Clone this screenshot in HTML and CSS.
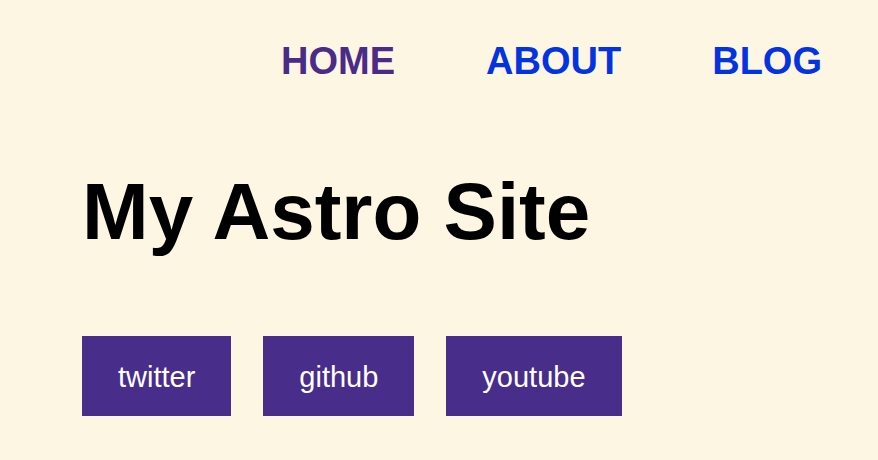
FILE: index.html
```html
<!DOCTYPE html>
<html lang="en">
<head>
<meta charset="utf-8">
<title>My Astro Site</title>
<link rel="stylesheet" href="styles.css">
</head>
<body>
<nav class="nav">
  <a class="nav-link visited" href="#">HOME</a>
  <a class="nav-link" href="#">ABOUT</a>
  <a class="nav-link" href="#">BLOG</a>
</nav>
<main class="main">
  <h1 class="title">My Astro Site</h1>
  <div class="socials">
    <a class="social" href="#">twitter</a>
    <a class="social" href="#">github</a>
    <a class="social" href="#">youtube</a>
  </div>
</main>
</body>
</html>
```
FILE: styles.css
```css
html, body {
  margin: 0;
  padding: 0;
  background: #fdf6e3;
  font-family: "Liberation Sans", Arial, sans-serif;
}
.nav {
  display: flex;
  justify-content: flex-end;
  gap: 91px;
  padding: 42px 56px 0 0;
}
.nav-link {
  font-size: 38px;
  line-height: 38px;
  font-weight: bold;
  color: #0433e0;
  text-decoration: none;
}
.nav-link.visited {
  color: #4a2b88;
}
.main {
  padding: 0 0 0 82px;
}
.title {
  margin: 92px 0 0 0;
  font-size: 80px;
  line-height: 80px;
  font-weight: bold;
  color: #000;
}
.socials {
  display: flex;
  gap: 32px;
  margin-top: 84px;
}
.social {
  background: #482d8b;
  color: #fff;
  text-decoration: none;
  font-size: 29px;
  line-height: 34px;
  padding: 24px 36px 22px;
}
```
